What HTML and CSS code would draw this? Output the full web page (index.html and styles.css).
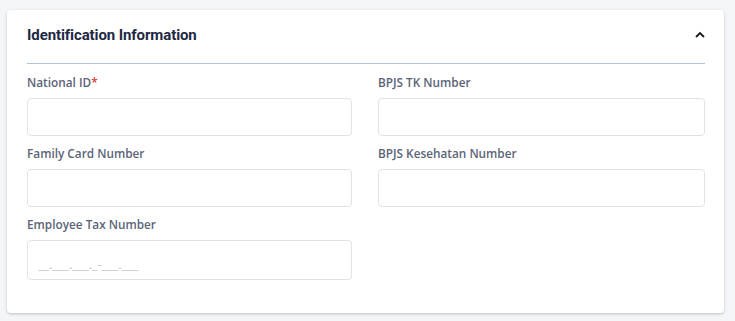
FILE: index.html
```html
<!DOCTYPE html>
<html>
<head>
<meta charset="utf-8">
<link rel="stylesheet" href="styles.css">
</head>
<body>
<div class="card">
  <div class="card-header">
    <h2 class="title">Identification Information</h2>
    <svg class="chevron" width="10" height="7" viewBox="0 0 10 7"><path d="M1 6 L5 2 L9 6" fill="none" stroke="#1a1a1a" stroke-width="1.8"/></svg>
  </div>
  <div class="form-grid">
    <div class="field">
      <label class="label">National ID<span class="req">*</span></label>
      <input class="input" type="text">
    </div>
    <div class="field">
      <label class="label">BPJS TK Number</label>
      <input class="input" type="text">
    </div>
    <div class="field">
      <label class="label">Family Card Number</label>
      <input class="input" type="text">
    </div>
    <div class="field">
      <label class="label">BPJS Kesehatan Number</label>
      <input class="input" type="text">
    </div>
    <div class="field">
      <label class="label">Employee Tax Number</label>
      <input class="input input-tax" type="text" placeholder="__.___.___._-___.___">
    </div>
  </div>
</div>
</body>
</html>
```
FILE: styles.css
```css
html, body {
  margin: 0;
  padding: 0;
}
body {
  background: #f4f5f9;
  padding: 10px 11px 8px 7px;
  font-family: "Open Sans", sans-serif;
}
.card {
  background: #fff;
  border-radius: 4px;
  box-shadow: 0 1px 3px rgba(0,0,0,0.22);
  padding: 0 19px 34px 20px;
  height: 303px;
  box-sizing: border-box;
}
.card-header {
  display: flex;
  align-items: center;
  justify-content: space-between;
  height: 49px;
  border-bottom: 1px solid #b3c4da;
  padding-top: 0;
  padding-bottom: 4px;
  box-sizing: content-box;
}
.title {
  margin: 0;
  font-family: Roboto, "Liberation Sans", sans-serif;
  font-size: 15px;
  font-weight: 700;
  color: #1e2844;
  letter-spacing: -0.1px;
}
.chevron {
  margin-top: -1px;
}
.form-grid {
  display: grid;
  grid-template-columns: 325px 327px;
  column-gap: 26px;
  row-gap: 9px;
  padding-top: 10px;
}
.field {
  display: flex;
  flex-direction: column;
}
.label {
  font-size: 11.8px;
  line-height: 16px;
  font-weight: 600;
  color: #5b6478;
  margin-bottom: 8px;
}
.req {
  color: #e53935;
}
.input {
  height: 38px;
  box-sizing: border-box;
  border: 1px solid #dfe2e7;
  border-radius: 4px;
  padding: 0 10px;
  font-family: "Open Sans", sans-serif;
  font-size: 12px;
  outline: none;
}
.input-tax {
  height: 40px;
  padding-top: 8px;
}
.input-tax::placeholder {
  color: #c4c8d0;
  font-size: 12.6px;
}
```
